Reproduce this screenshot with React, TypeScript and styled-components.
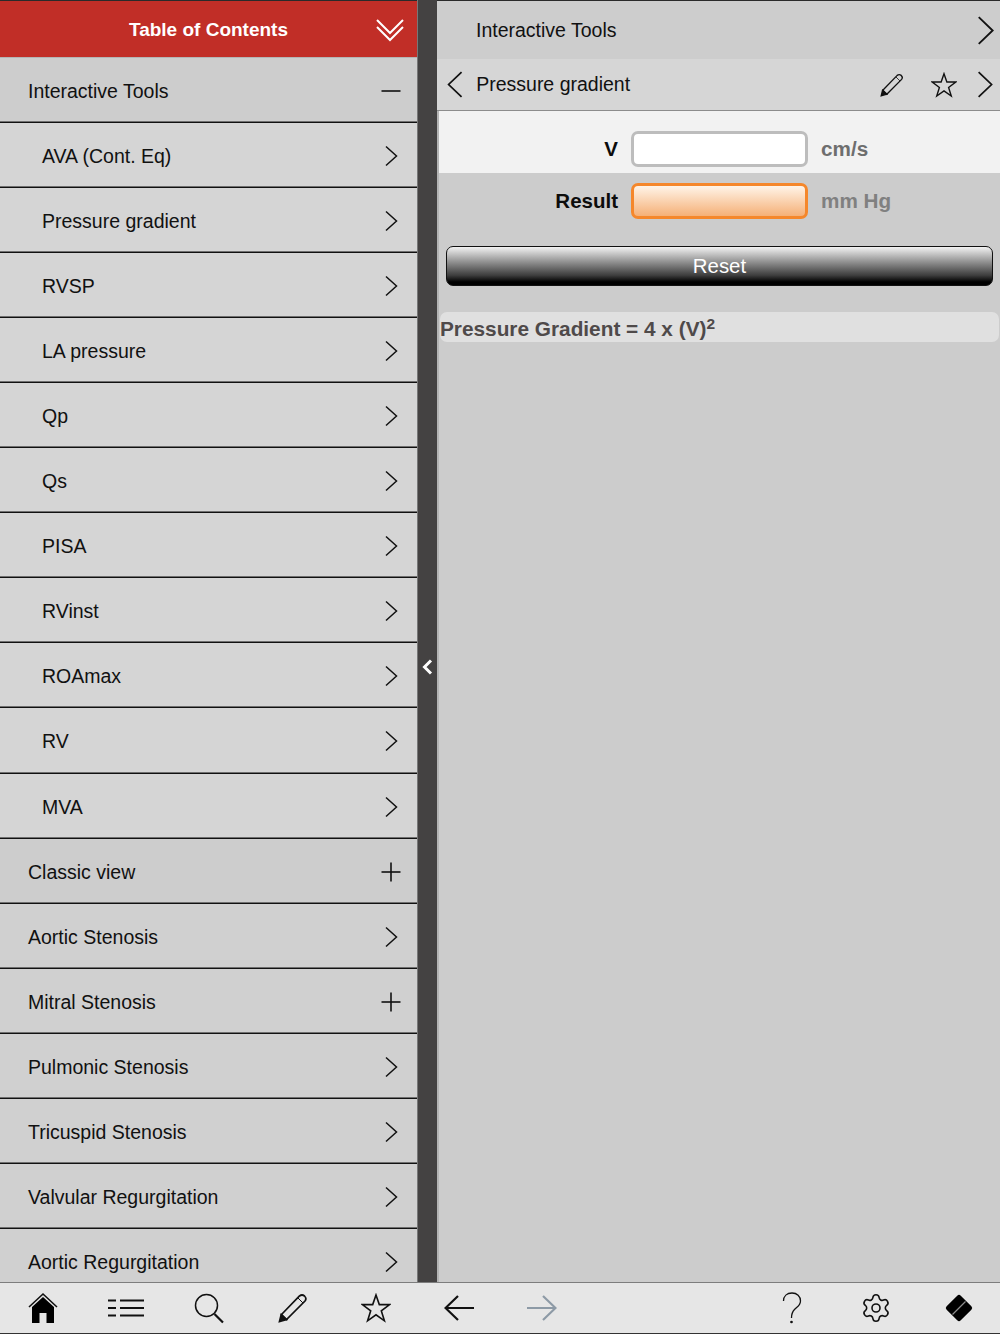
import styled, { createGlobalStyle } from "styled-components";
import { Settings } from "lucide-react";

const GlobalStyle = createGlobalStyle`
    html, body {
        margin: 0;
        padding: 0;
        background: #cccccc;
    }
    * {
        box-sizing: border-box;
    }
`;

const Page = styled.div`
    width: 1000px;
    height: 1334px;
    display: flex;
    flex-direction: column;
    overflow: hidden;
    font-family: "Liberation Sans", Arial, sans-serif;
    color: #111;
`;

const Main = styled.div`
    flex: 1;
    min-height: 0;
    display: flex;
`;

const Sidebar = styled.div`
    width: 417px;
    overflow: hidden;
    background: #d4d4d4;
`;

const TocHeader = styled.div`
    height: 58px;
    padding-top: 2px;
    border-top: 1px solid #2a2a2a;
    border-bottom: 1px solid #b5b5b5;
    background: #c12e27;
    color: #fff;
    font-size: 19px;
    font-weight: bold;
    display: flex;
    align-items: center;
    justify-content: center;
    position: relative;
    svg {
        position: absolute;
        right: 13px;
        top: 17px;
    }
`;

const Row = styled.div<{ $sub?: boolean; $group?: boolean }>`
    height: 65.06px;
    flex-shrink: 0;
    padding: 2px 16px 0 ${(p) => (p.$sub ? "42px" : "28px")};
    display: flex;
    align-items: center;
    justify-content: space-between;
    font-size: 19.5px;
    background: ${(p) => (p.$sub ? "#d5d5d5" : p.$group ? "#cdcdcd" : "#d0d0d0")};
    border-bottom: 1px solid #111;
    box-shadow: inset 0 -1px 0 #6f6f6f;
`;

const RowLabel = styled.span`
    padding-top: 1px;
`;

const Divider = styled.div`
    width: 20px;
    background: #444242;
    border-left: 1px solid #777;
    display: flex;
    align-items: center;
    justify-content: center;
    padding-top: 52px;
`;

const Detail = styled.div`
    flex: 1;
    min-width: 0;
    display: flex;
    flex-direction: column;
    background: #cccccc;
`;

const DetailTitle = styled.div`
    height: 59px;
    border-top: 1px solid #2a2a2a;
    padding: 0 6px 0 39px;
    display: flex;
    align-items: center;
    justify-content: space-between;
    font-size: 19.5px;
    background: #cdcdcd;
`;

const DetailNav = styled.div`
    height: 52px;
    padding: 0 7px 0 10px;
    display: flex;
    align-items: center;
    font-size: 19.5px;
    background: #d6d6d6;
    border-bottom: 1px solid #8c8c8c;
`;

const NavLabel = styled.span`
    margin-left: 13px;
    flex: 1;
`;

const NavActions = styled.div`
    display: flex;
    align-items: center;
    gap: 20px;
`;

const PencilSlot = styled.span`
    display: flex;
    margin-right: 7px;
`;

const Content = styled.div`
    flex: 1;
    min-height: 0;
    border-left: 2px solid #b4b4b4;
`;

const FormRow = styled.div<{ $light?: boolean }>`
    height: ${(p) => (p.$light ? "62px" : "56px")};
    display: grid;
    grid-template-columns: 179px 177px 1fr;
    column-gap: 13px;
    align-items: center;
    background: ${(p) => (p.$light ? "#f2f2f2" : "transparent")};
    padding-top: ${(p) => (p.$light ? "20px" : "0")};
    padding-bottom: ${(p) => (p.$light ? "6px" : "0")};
`;

const FieldLabel = styled.label`
    text-align: right;
    font-size: 20.5px;
    font-weight: bold;
    color: #0c0c0c;
`;

const Field = styled.div<{ $result?: boolean }>`
    height: 36px;
    border-radius: 7px;
    border: 3px solid ${(p) => (p.$result ? "#f5872b" : "#bdbdbd")};
    background: ${(p) =>
        p.$result ? "linear-gradient(#fff4e8, #f5b077)" : "#ffffff"};
`;

const Unit = styled.span<{ $dim?: boolean }>`
    font-size: 20.7px;
    font-weight: bold;
    color: ${(p) => (p.$dim ? "#808080" : "#6e6e6e")};
`;

const ResetButton = styled.button`
    display: block;
    width: 547px;
    height: 40px;
    margin: 17px 0 0 7px;
    padding: 1px 0 0;
    border: 1px solid #111;
    border-radius: 7px;
    background: linear-gradient(#f2f2f2 0%, #8f8f8f 40%, #3c3c3c 75%, #000 92%);
    color: #fff;
    font-family: inherit;
    font-size: 20.4px;
`;

const Formula = styled.div`
    height: 30px;
    margin: 26px 1px 0 1px;
    padding-top: 4px;
    border-radius: 7px;
    background: #e0e0e0;
    color: #4f4a4a;
    font-size: 20.8px;
    font-weight: bold;
    display: flex;
    align-items: center;
    white-space: pre;
`;

const Power = styled.span`
    font-size: 15.5px;
    margin-bottom: 11px;
`;

const Toolbar = styled.div`
    height: 52px;
    flex-shrink: 0;
    background: #e6e6e6;
    border-top: 1px solid #7d7d7d;
    border-bottom: 1px solid #333;
    display: grid;
    grid-template-columns: repeat(12, 83.3px);
    justify-items: center;
    align-items: center;
    padding-left: 1px;
`;

const ToolSlot = styled.div`
    display: flex;
    align-items: center;
    justify-content: center;
`;

const Chevron = ({ size = 24, left = false, width = 1.6 }: { size?: number; left?: boolean; width?: number }) => (
    <svg width={size * 0.6} height={size} viewBox="0 0 15 25" fill="none" stroke="#111" strokeWidth={width}>
        <path d={left ? "M13.5 1 L1.5 12.5 L13.5 24" : "M1.5 1 L13.5 12.5 L1.5 24"} />
    </svg>
);

const RowMark = ({ kind }: { kind: "next" | "plus" | "minus" }) => {
    if (kind === "next") {
        return (
            <svg width="22" height="24" viewBox="0 0 22 24" fill="none" stroke="#111" strokeWidth="1.5">
                <path d="M7 2.5 L17.5 12 L7 21.5" />
            </svg>
        );
    }
    return (
        <svg width="20" height="20" viewBox="0 0 20 20" fill="none" stroke="#111" strokeWidth="1.6">
            <path d="M0.5 10 H19.5" />
            {kind === "plus" && <path d="M10 0.5 V19.5" />}
        </svg>
    );
};

const DoubleDown = () => (
    <svg width="28" height="24" viewBox="0 0 28 24" fill="none" stroke="#fff" strokeWidth="2">
        <path d="M1 2 L14 15 L27 2" />
        <path d="M1 9 L14 22 L27 9" />
    </svg>
);

const Pencil = ({ size }: { size: number }) => (
    <svg width={size} height={size} viewBox="0 0 30 30" fill="none" stroke="#111" strokeWidth="1.7">
        <path d="M3.5 21.5 L21.5 3 Q24 1 26.5 3 Q29 5.5 27 8 L8.5 26.5 Z" />
        <path d="M20 5 L25 10" strokeWidth="1" />
        <path d="M1.5 28.5 L3.2 21.5 L8.5 26.5 Z" fill="#111" />
    </svg>
);

const Star = ({ size }: { size: number }) => (
    <svg width={size} height={size} viewBox="0 0 30 30" fill="none" stroke="#111" strokeWidth="1.6" strokeLinejoin="miter">
        <path d="M15 2 L18.3 11.6 L28.6 11.6 L20.3 17.8 L23.4 27.8 L15 21.8 L6.6 27.8 L9.7 17.8 L1.4 11.6 L11.7 11.6 Z" />
    </svg>
);

const Home = () => (
    <svg width="30" height="32" viewBox="0 0 30 32">
        <path d="M1 15 L15 2 L29 15" fill="none" stroke="#111" strokeWidth="1.6" />
        <path d="M4 15 L15 5 L26 15 V31 H18.5 V21 H11.5 V31 H4 Z" fill="#000" />
    </svg>
);

const ListIcon = () => (
    <svg width="38" height="20" viewBox="0 0 38 20" stroke="#111" strokeWidth="2.2" fill="none">
        <path d="M1 2.5 H9 M1 10 H9 M1 17.5 H9" />
        <path d="M13 2.5 H37 M13 10 H37 M13 17.5 H37" />
    </svg>
);

const SearchIcon = () => (
    <svg width="30" height="31" viewBox="0 0 30 31" fill="none" stroke="#111">
        <circle cx="12.5" cy="12.5" r="11" strokeWidth="1.5" />
        <path d="M20.5 21 L29 29.5" strokeWidth="2.2" />
    </svg>
);

const ArrowIcon = ({ color, flip }: { color: string; flip?: boolean }) => (
    <svg width="30" height="26" viewBox="0 0 30 26" fill="none" stroke={color} strokeWidth="2.2">
        <path d={flip ? "M0 13 H28 M16 1 L28.5 13 L16 25" : "M30 13 H2 M14 1 L1.5 13 L14 25"} />
    </svg>
);

const HelpIcon = () => (
    <svg width="20" height="32" viewBox="0 0 20 32" fill="none" stroke="#111" strokeWidth="1.3">
        <path d="M1.5 9 C1.5 4 5 1 10 1 C15 1 18.5 4.5 18.5 9 C18.5 13.5 15 15 12.5 17.5 C10.5 19.5 9.5 22 9.5 26" />
        <circle cx="9.5" cy="30" r="0.7" fill="#111" />
    </svg>
);

const EraserIcon = () => (
    <svg width="32" height="32" viewBox="0 0 32 32">
        <rect x="6" y="6" width="20" height="20" rx="2.5" fill="#000" transform="rotate(45 16 16)" />
        <path d="M9.5 22.5 L22.5 9.5" stroke="#8c8c8c" strokeWidth="1.2" />
    </svg>
);

type TocItem = {
    label: string;
    mark: "next" | "plus" | "minus";
    sub?: boolean;
    group?: boolean;
};

const items: TocItem[] = [
    { label: "Interactive Tools", mark: "minus", group: true },
    { label: "AVA (Cont. Eq)", mark: "next", sub: true },
    { label: "Pressure gradient", mark: "next", sub: true },
    { label: "RVSP", mark: "next", sub: true },
    { label: "LA pressure", mark: "next", sub: true },
    { label: "Qp", mark: "next", sub: true },
    { label: "Qs", mark: "next", sub: true },
    { label: "PISA", mark: "next", sub: true },
    { label: "RVinst", mark: "next", sub: true },
    { label: "ROAmax", mark: "next", sub: true },
    { label: "RV", mark: "next", sub: true },
    { label: "MVA", mark: "next", sub: true },
    { label: "Classic view", mark: "plus", group: true },
    { label: "Aortic Stenosis", mark: "next" },
    { label: "Mitral Stenosis", mark: "plus" },
    { label: "Pulmonic Stenosis", mark: "next" },
    { label: "Tricuspid Stenosis", mark: "next" },
    { label: "Valvular Regurgitation", mark: "next" },
    { label: "Aortic Regurgitation", mark: "next" },
];

function App() {
    return (
        <Page>
            <GlobalStyle />
            <Main>
                <Sidebar>
                    <TocHeader>
                        Table of Contents
                        <DoubleDown />
                    </TocHeader>
                    {items.map((item) => (
                        <Row key={item.label} $sub={item.sub} $group={item.group}>
                            <RowLabel>{item.label}</RowLabel>
                            <RowMark kind={item.mark} />
                        </Row>
                    ))}
                </Sidebar>
                <Divider>
                    <svg width="11" height="16" viewBox="0 0 11 16" fill="none" stroke="#fff" strokeWidth="3">
                        <path d="M9 1.5 L2.5 8 L9 14.5" />
                    </svg>
                </Divider>
                <Detail>
                    <DetailTitle>
                        Interactive Tools
                        <Chevron size={29} />
                    </DetailTitle>
                    <DetailNav>
                        <Chevron size={27} left />
                        <NavLabel>Pressure gradient</NavLabel>
                        <NavActions>
                            <PencilSlot><Pencil size={24} /></PencilSlot>
                            <Star size={26} />
                            <Chevron size={27} />
                        </NavActions>
                    </DetailNav>
                    <Content>
                        <FormRow $light>
                            <FieldLabel>V</FieldLabel>
                            <Field />
                            <Unit>cm/s</Unit>
                        </FormRow>
                        <FormRow>
                            <FieldLabel>Result</FieldLabel>
                            <Field $result />
                            <Unit $dim>mm Hg</Unit>
                        </FormRow>
                        <ResetButton>Reset</ResetButton>
                        <Formula>
                            Pressure Gradient = 4 x (V)<Power>2</Power>
                        </Formula>
                    </Content>
                </Detail>
            </Main>
            <Toolbar>
                <ToolSlot><Home /></ToolSlot>
                <ToolSlot><ListIcon /></ToolSlot>
                <ToolSlot><SearchIcon /></ToolSlot>
                <ToolSlot><Pencil size={30} /></ToolSlot>
                <ToolSlot><Star size={30} /></ToolSlot>
                <ToolSlot><ArrowIcon color="#111" /></ToolSlot>
                <ToolSlot><ArrowIcon color="#8d9aa6" flip /></ToolSlot>
                <ToolSlot />
                <ToolSlot />
                <ToolSlot><HelpIcon /></ToolSlot>
                <ToolSlot><Settings size={32} strokeWidth={1.2} color="#111" /></ToolSlot>
                <ToolSlot><EraserIcon /></ToolSlot>
            </Toolbar>
        </Page>
    );
}

export default App;
